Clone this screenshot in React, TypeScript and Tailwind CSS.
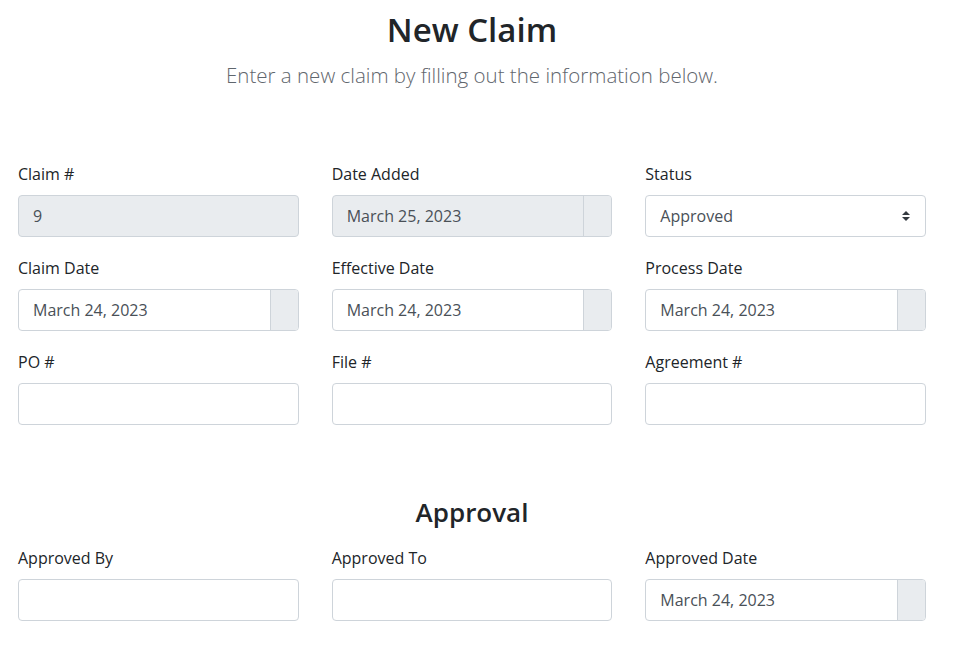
import {ReactNode} from "react";

type Field = {
  label: string;
  value?: string;
  kind?: "text" | "date" | "select";
  disabled?: boolean;
};

const claimFields: Field[] = [
  {label: "Claim #", value: "9", disabled: true},
  {label: "Date Added", value: "March 25, 2023", kind: "date", disabled: true},
  {label: "Status", value: "Approved", kind: "select"},
  {label: "Claim Date", value: "March 24, 2023", kind: "date"},
  {label: "Effective Date", value: "March 24, 2023", kind: "date"},
  {label: "Process Date", value: "March 24, 2023", kind: "date"},
  {label: "PO #"},
  {label: "File #"},
  {label: "Agreement #"},
];

const approvalFields: Field[] = [
  {label: "Approved By"},
  {label: "Approved To"},
  {label: "Approved Date", value: "March 24, 2023", kind: "date"},
];

function SortCaret() {
  return (
    <svg width="10" height="14" viewBox="0 0 10 14" className="fill-[#343a40]">
      <path d="M5 2 L9 6 H1 Z" />
      <path d="M5 12 L1 8 H9 Z" />
    </svg>
  );
}

function Control({field}: {field: Field}) {
  const kind = field.kind ?? "text";
  const base = field.disabled ? "bg-[#e9ecef]" : "bg-white";

  if (kind === "date") {
    return (
      <div className={`flex h-[42px] rounded-[4px] border border-[#ced4da] overflow-hidden ${base}`}>
        <div className="flex-1 flex items-center px-[14px] text-[#495057]">
          {field.value}
        </div>
        <div className="w-[28px] bg-[#e9ecef] border-l border-[#ced4da]" />
      </div>
    );
  }

  if (kind === "select") {
    return (
      <div className={`flex items-center justify-between h-[42px] rounded-[4px] border border-[#ced4da] pl-[14px] pr-[14px] text-[#495057] ${base}`}>
        <span>{field.value}</span>
        <SortCaret />
      </div>
    );
  }

  return (
    <div className={`flex items-center h-[42px] rounded-[4px] border border-[#ced4da] px-[14px] text-[#495057] ${base}`}>
      {field.value}
    </div>
  );
}

function FieldGrid({fields}: {fields: Field[]}): ReactNode {
  return (
    <div className="grid grid-cols-3 gap-x-[33px] gap-y-[19px]">
      {fields.map(field => (
        <div key={field.label} className="flex flex-col">
          <label className="leading-6 mb-[9px] text-[#212529]">{field.label}</label>
          <Control field={field} />
        </div>
      ))}
    </div>
  );
}

export default function App() {
  return (
    <div
      className="min-h-[662px] bg-white text-[16px] text-[#212529]"
      style={{fontFamily: '"Open Sans", "Noto Sans", sans-serif'}}
    >
      <div className="w-[908px] ml-[18px]">
        <div className="flex flex-col items-center pt-[8px]">
          <h1 className="text-[33px] leading-[44px] font-semibold text-[#212529]">New Claim</h1>
          <p className="mt-[10px] text-[20.5px] leading-[26px] font-light text-[#5f666d]">
            Enter a new claim by filling out the information below.
          </p>
        </div>

        <div className="mt-[74px]">
          <FieldGrid fields={claimFields} />
        </div>

        <h2 className="mt-[70px] mb-[17px] text-center text-[26px] leading-[34px] font-semibold text-[#212529]">
          Approval
        </h2>

        <FieldGrid fields={approvalFields} />
      </div>
    </div>
  );
}
